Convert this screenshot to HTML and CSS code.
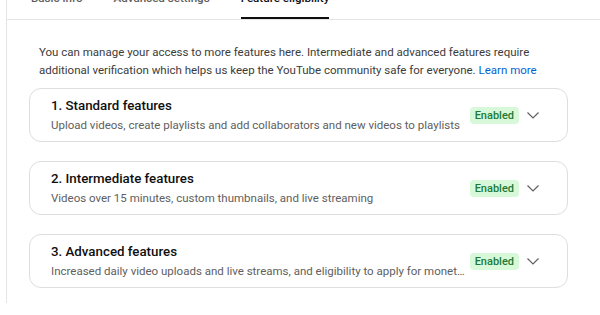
FILE: index.html
```html
<!DOCTYPE html>
<html lang="en">
<head>
    <meta charset="UTF-8">
    <title>Feature eligibility</title>
    <link rel="stylesheet" href="styles.css">
</head>
<body>
    <div class="page">
        <div class="tabs">
            <div class="tab">Basic info</div>
            <div class="tab">Advanced settings</div>
            <div class="tab active">Feature eligibility</div>
        </div>

        <div class="content">
            <p class="intro">You can manage your access to more features here. Intermediate and advanced features require additional verification which helps us keep the YouTube community safe for everyone. <a href="#">Learn more</a></p>

            <div class="feature-list">
                <div class="feature-card">
                    <div class="feature-text">
                        <h2>1. Standard features</h2>
                        <p>Upload videos, create playlists and add collaborators and new videos to playlists</p>
                    </div>
                    <span class="badge">Enabled</span>
                    <span class="chevron">
                        <svg viewBox="0 0 24 24" width="24" height="24"><path d="M6.5 9.5l5.5 5.5 5.5-5.5" fill="none" stroke="#606060" stroke-width="1.2"/></svg>
                    </span>
                </div>

                <div class="feature-card">
                    <div class="feature-text">
                        <h2>2. Intermediate features</h2>
                        <p>Videos over 15 minutes, custom thumbnails, and live streaming</p>
                    </div>
                    <span class="badge">Enabled</span>
                    <span class="chevron">
                        <svg viewBox="0 0 24 24" width="24" height="24"><path d="M6.5 9.5l5.5 5.5 5.5-5.5" fill="none" stroke="#606060" stroke-width="1.2"/></svg>
                    </span>
                </div>

                <div class="feature-card">
                    <div class="feature-text">
                        <h2>3. Advanced features</h2>
                        <p>Increased daily video uploads and live streams, and eligibility to apply for monetization</p>
                    </div>
                    <span class="badge">Enabled</span>
                    <span class="chevron">
                        <svg viewBox="0 0 24 24" width="24" height="24"><path d="M6.5 9.5l5.5 5.5 5.5-5.5" fill="none" stroke="#606060" stroke-width="1.2"/></svg>
                    </span>
                </div>
            </div>
        </div>
    </div>
</body>
</html>
```

FILE: styles.css
```css
* {
    margin: 0;
    padding: 0;
    box-sizing: border-box;
}

body {
    background-color: #fff;
    color: #0f0f0f;
    font-family: Roboto, 'Noto Sans', Arial, sans-serif;
    overflow: hidden;
}

.page {
    margin-left: 6px;
    min-height: 315px;
    border-left: 1px solid #e5e5e5;
}

.tabs {
    display: flex;
    gap: 31px;
    margin-top: -12px;
    padding-left: 24px;
    border-bottom: 1px solid #e5e5e5;
}

.tab {
    font-size: 11.6px;
    font-weight: 500;
    line-height: 20px;
    color: #606060;
    padding-bottom: 9px;
    border-bottom: 2px solid transparent;
}

.tab.active {
    color: #0f0f0f;
    border-bottom-color: #0f0f0f;
}

.content {
    padding: 23px 32px 0 22px;
}

.intro {
    font-size: 11.5px;
    line-height: 18px;
    color: #3c3c3c;
    padding: 0 10px;
    margin-bottom: 9px;
}

.intro a {
    color: #065fd4;
    text-decoration: none;
}

.feature-list {
    display: flex;
    flex-direction: column;
    gap: 19px;
}

.feature-card {
    display: flex;
    align-items: center;
    height: 54px;
    padding: 0 22px 0 21px;
    border: 1px solid #dedede;
    border-radius: 12px;
}

.feature-text {
    flex: 1;
    min-width: 0;
    margin-right: 4px;
}

.feature-text h2 {
    font-size: 13.3px;
    font-weight: 500;
    line-height: 20px;
    color: #0f0f0f;
}

.feature-text p {
    font-size: 11.5px;
    line-height: 18px;
    color: #606060;
    white-space: nowrap;
    overflow: hidden;
    text-overflow: ellipsis;
}

.badge {
    flex: none;
    font-size: 11px;
    font-weight: 500;
    line-height: 17px;
    padding: 0 5px;
    border-radius: 4px;
    background-color: #d7f9d9;
    color: #1d7a36;
}

.chevron {
    flex: none;
    display: flex;
    width: 24px;
    height: 24px;
    margin-left: 2px;
}
```
